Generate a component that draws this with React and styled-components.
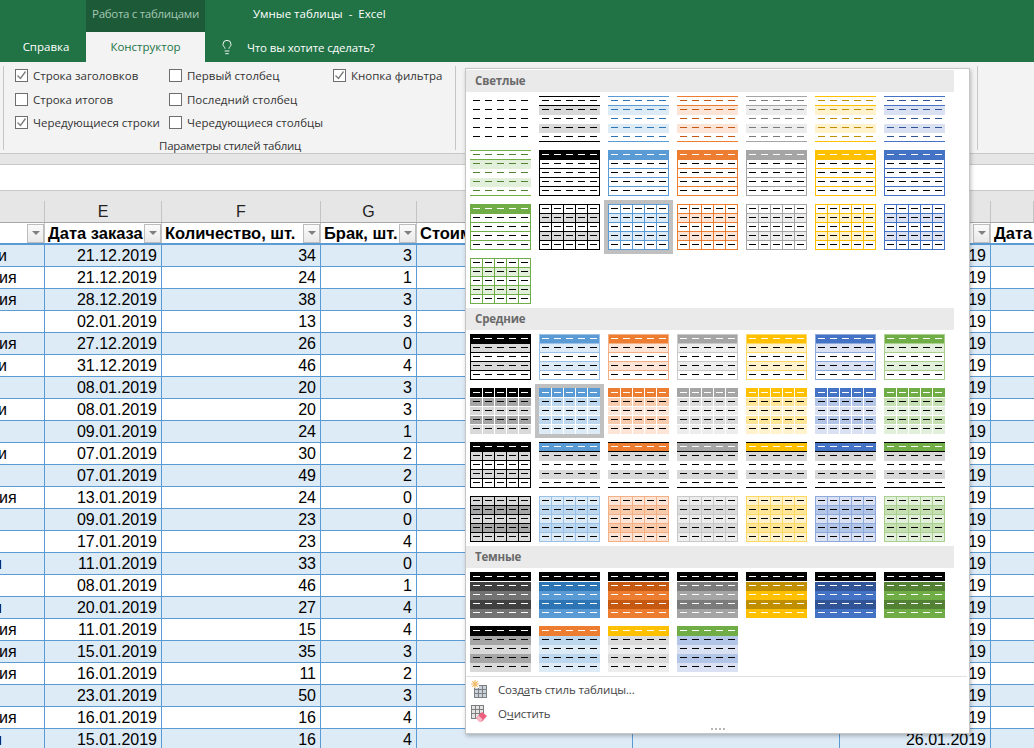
import React from "react";
import styled, { createGlobalStyle } from "styled-components";
import { Lightbulb } from "lucide-react";

const GlobalStyle = createGlobalStyle`
  html, body {
    margin: 0;
    padding: 0;
    background: #fff;
  }
`;

const UI_FONT = `"Open Sans", "Noto Sans", sans-serif`;
const CELL_FONT = `"Liberation Sans", Arial, sans-serif`;

const Ventana = styled.div`
  position: relative;
  width: 1034px;
  height: 748px;
  overflow: hidden;
  font-family: ${UI_FONT};
`;

/* Barra de titulo */
const TitleBar = styled.div`
  display: flex;
  height: 32px;
  padding-left: 86px;
  background: #217346;
  font-size: 11.5px;
  line-height: 27px;
`;

const ContextLabel = styled.div`
  width: 119px;
  background: #1c5a38;
  color: #a6c8b4;
  text-align: center;
  white-space: nowrap;
  letter-spacing: -0.3px;
`;

const WindowTitle = styled.div`
  margin-left: 48px;
  color: #fff;
  white-space: pre;
`;

const TabsBar = styled.div`
  display: flex;
  height: 30px;
  background: #217346;
  font-size: 11.5px;
  line-height: 29px;
  color: #fff;
`;

const Tab = styled.div`
  width: ${(p) => p.$width}px;
  box-sizing: border-box;
  padding-left: ${(p) => p.$inset || 0}px;
  text-align: center;
  white-space: nowrap;
  background: ${(p) => (p.$active ? "#f3f3f3" : "transparent")};
  color: ${(p) => (p.$active ? "#217346" : "#fff")};
`;

const HelpSearch = styled.div`
  display: flex;
  align-items: center;
  gap: 12px;
  margin-left: 14px;
  white-space: nowrap;
  letter-spacing: -0.15px;
  svg {
    flex: none;
  }
`;

/* Cinta */
const Ribbon = styled.div`
  display: flex;
  align-items: flex-start;
  height: 92px;
  padding: 2px 0 0 3px;
  box-sizing: border-box;
  background: #f3f3f3;
  border-bottom: 1px solid #c8c8c8;
  color: #333;
  font-size: 11.5px;
`;

const RibbonSep = styled.div`
  flex: none;
  width: 1px;
  height: 84px;
  margin-top: 2px;
  background: #c6c6c6;
  margin-right: ${(p) => p.$after || 0}px;
`;

const RibbonGroup = styled.div`
  flex: none;
  width: 451px;
  height: 86px;
  display: flex;
  flex-direction: column;
  padding-left: 11px;
  box-sizing: border-box;
`;

const OptionsGrid = styled.div`
  display: grid;
  grid-template-columns: 154px 164px 1fr;
  grid-auto-rows: 23.5px;
`;

const Option = styled.label`
  display: flex;
  align-items: center;
  gap: 5px;
  white-space: nowrap;
  grid-column: ${(p) => p.$col};
  grid-row: ${(p) => p.$row};
`;

const Box = styled.span`
  flex: none;
  width: 13px;
  height: 13px;
  box-sizing: border-box;
  border: 1px solid #6e6e6e;
  background: #fff;
  display: flex;
  align-items: center;
  justify-content: center;
`;

const GroupName = styled.div`
  margin-top: 3px;
  padding-right: 10px;
  text-align: center;
  letter-spacing: -0.3px;
`;

const BarGap = styled.div`
  height: 10px;
  background: #e6e6e6;
  border-bottom: 1px solid #c8c8c8;
`;

const FormulaBar = styled.div`
  height: 25px;
  background: #fff;
  border-bottom: 1px solid #c8c8c8;
`;

/* Hoja */
const COLS = "45px 117px 159px 96px 216px 207px 151px 43px";

const LettersRow = styled.div`
  display: grid;
  grid-template-columns: ${COLS};
  height: 32px;
  padding-top: 10px;
  box-sizing: border-box;
  background: #e6e6e6;
  border-bottom: 1px solid #a8a8a8;
  font: 16px ${CELL_FONT};
  color: #222;
`;

const Letter = styled.div`
  height: 21px;
  line-height: 22px;
  text-align: center;
  border-right: 1px solid #c4c4c4;
`;

const HeaderRow = styled.div`
  display: grid;
  grid-template-columns: ${COLS};
  height: 20px;
  background: #fff;
  border-bottom: 2px solid #5b9bd5;
  font: bold 16.5px ${CELL_FONT};
  color: #000;
`;

const HeaderCell = styled.div`
  display: flex;
  align-items: center;
  justify-content: space-between;
  padding-left: 3px;
  border-right: 1px solid #c4c4c4;
  white-space: nowrap;
  overflow: hidden;
  &:last-child {
    border-right: 0;
  }
`;

const FilterButton = styled.span`
  flex: none;
  margin-left: auto;
  width: 17px;
  height: 19px;
  box-sizing: border-box;
  border: 1px solid #bdbdbd;
  background: linear-gradient(#fbfbfb, #e9e9e9);
  display: flex;
  align-items: center;
  justify-content: center;
  &::after {
    content: "";
    border-left: 4px solid transparent;
    border-right: 4px solid transparent;
    border-top: 4px solid #7f7f7f;
  }
`;

const DataRow = styled.div`
  display: grid;
  grid-template-columns: ${COLS};
  height: 22px;
  box-sizing: border-box;
  border-bottom: 1px solid #5b9bd5;
  background: ${(p) => (p.$band ? "#ddebf7" : "#fff")};
  font: 16px/21px ${CELL_FONT};
  color: #000;
`;

const Cell = styled.div`
  border-right: 1px solid #5b9bd5;
  padding-right: 4px;
  text-align: right;
  white-space: nowrap;
  overflow: hidden;
  &:last-child {
    border-right: 0;
  }
`;

const ClippedCell = styled(Cell)`
  text-align: left;
  padding-right: 0;
  text-indent: ${(p) => p.$indent}px;
`;

/* Galeria de estilos */
const Gallery = styled.div`
  position: absolute;
  left: 465px;
  top: 68px;
  width: 505px;
  height: 666px;
  box-sizing: border-box;
  padding-top: 1px;
  background: #fff;
  border: 1px solid #c6c6c6;
  box-shadow: 1px 2px 4px rgba(0, 0, 0, 0.25);
`;

const SectionTitle = styled.div`
  width: 488px;
  height: 22px;
  box-sizing: border-box;
  padding-left: 9px;
  background: #eaeaea;
  color: #6a6a6a;
  font-size: 11.5px;
  font-weight: 700;
  line-height: 22px;
  letter-spacing: -0.2px;
`;

const ThumbGrid = styled.div`
  display: grid;
  grid-template-columns: repeat(7, 61px);
  grid-auto-rows: 46px;
  gap: 8px;
  padding: 4px 0 4px 4px;
`;

const ThumbSvg = styled.svg`
  display: block;
  width: 61px;
  height: 46px;
  box-shadow: ${(p) => (p.$selected ? "0 0 0 4px #c0c0c0" : "none")};
`;

const MenuSep = styled.div`
  width: 501px;
  height: 1px;
  background: #e1e1e1;
`;

const MenuItem = styled.div`
  display: flex;
  align-items: center;
  gap: 11px;
  height: 24px;
  padding-left: 5px;
  color: #444;
  font-size: 11.5px;
  white-space: nowrap;
  letter-spacing: -0.15px;
  svg {
    flex: none;
  }
`;

const Grip = styled.div`
  display: flex;
  justify-content: center;
  gap: 2px;
  padding-top: 3px;
  span {
    width: 2px;
    height: 2px;
    background: #b8b8b8;
  }
`;

/* ---- dibujo de las miniaturas ---- */
const BLUE = { c: "#5b9bd5", soft: "#9bc2e6", band: "#ddebf7", mid: "#bdd7ee", deep: "#2e75b6" };
const ORANGE = { c: "#ed7d31", soft: "#f4b084", band: "#fce4d6", mid: "#f8cbad", deep: "#c65911" };
const GRAY = { c: "#a5a5a5", soft: "#c9c9c9", band: "#ededed", mid: "#dbdbdb", deep: "#7b7b7b" };
const YELLOW = { c: "#ffc000", soft: "#ffd966", band: "#fff2cc", mid: "#ffe699", deep: "#bf8f00" };
const NAVY = { c: "#4472c4", soft: "#8ea9db", band: "#d9e1f2", mid: "#b4c6e7", deep: "#305496" };
const GREEN = { c: "#70ad47", soft: "#a9d08e", band: "#e2efda", mid: "#c6e0b4", deep: "#548235" };
const BLACK = { c: "#000", soft: "#000", band: "#d9d9d9", mid: "#a6a6a6", deep: "#404040" };
const COLORS = [BLUE, ORANGE, GRAY, YELLOW, NAVY];
const COLORS_G = [...COLORS, GREEN];

const K = "#000";
const W = "#fff";
const ALL_H = [0, 9, 18, 27, 36, 45];

const plain = () => ({ dash: [K, K, K, K, K] });
const lined = (p) => ({
  fills: [null, p.band, null, p.band, null],
  hlines: [0, 9, 45],
  line: p.c,
  dash: Array(5).fill(p === BLACK ? K : p.deep),
});
const boxed = (p) => ({
  fills: [p.c],
  hlines: ALL_H,
  frame: true,
  line: p.c,
  dash: [W, K, K, K, K],
});
const grid = (p) => ({
  fills: [null, p.band, null, p.band, null],
  hlines: ALL_H,
  vlines: true,
  frame: true,
  line: p.c,
  dash: [K, K, K, K, K],
});
const medium = (p) => ({
  fills: [p.c, p.band, null, p.band, null],
  hlines: ALL_H,
  frame: true,
  line: p.soft,
  dash: [W, K, K, K, K],
});
const cells = (p) => ({
  fills: [p.c, p.mid, p.band, p.mid, p.band],
  gaps: true,
  dash: [W, K, K, K, K],
});
const ruled = (p) => ({
  fills: [p.c, "#d9d9d9", null, "#d9d9d9", null],
  hlines: [0, 9, 45],
  line: K,
  dash: [W, K, K, K, K],
});
const gridFill = (p) => ({
  fills: [p.band, p.mid, p.band, p.mid, p.band],
  hlines: ALL_H,
  vlines: true,
  frame: true,
  line: p.soft,
  dash: [K, K, K, K, K],
});
const dark = (a, b) => ({
  fills: [K, a, b, a, b],
  gapAfterHead: true,
  dash: [W, W, W, W, W],
});
const darkLight = (head, a, b) => ({
  fills: [head, a, b, a, b],
  dash: [W, K, K, K, K],
});

const LIGHT_THUMBS = [
  plain(),
  lined(BLACK),
  ...COLORS.map(lined),
  lined(GREEN),
  boxed(BLACK),
  ...COLORS.map(boxed),
  boxed(GREEN),
  grid(BLACK),
  { ...grid(BLUE), selected: true },
  ...COLORS.slice(1).map(grid),
  grid(GREEN),
];

const MEDIUM_THUMBS = [
  medium(BLACK),
  ...COLORS_G.map(medium),
  cells(BLACK),
  { ...cells(BLUE), selected: true },
  ...COLORS_G.slice(1).map(cells),
  {
    fills: [K, "#d9d9d9", null, "#d9d9d9", null],
    hlines: ALL_H,
    vlines: true,
    frame: true,
    line: K,
    dash: [W, K, K, K, K],
  },
  ...COLORS_G.map(ruled),
  gridFill(BLACK),
  ...COLORS_G.map(gridFill),
];

const DARK_THUMBS = [
  dark("#404040", "#737373"),
  ...COLORS_G.map((p) => dark(p.deep, p.c)),
  darkLight(K, "#a6a6a6", "#d9d9d9"),
  darkLight(ORANGE.c, BLUE.mid, BLUE.band),
  darkLight(YELLOW.c, "#dbdbdb", "#ededed"),
  darkLight(GREEN.c, NAVY.mid, NAVY.band),
];

function TableThumb({ spec }) {
  const { fills = [], hlines = [], vlines, frame, line, gaps, gapAfterHead, dash, selected } = spec;
  return (
    <ThumbSvg viewBox="0 0 61 46" shapeRendering="crispEdges" $selected={selected}>
      {fills.map((f, i) =>
        f ? (
          <rect key={i} x="0" y={i === 0 ? 0 : 9 * i + 1} width="61" height={i === 0 ? 10 : 9} fill={f} />
        ) : null
      )}
      {gaps &&
        [9, 18, 27, 36].map((y) => <rect key={y} x="0" y={y} width="61" height="1" fill="#fff" />)}
      {gaps &&
        [12, 24, 36, 48].map((x) => <rect key={x} x={x} y="0" width="1" height="46" fill="#fff" />)}
      {gapAfterHead && <rect x="0" y="9" width="61" height="1" fill="#fff" />}
      {hlines.map((y) => (
        <rect key={y} x="0" y={y} width="61" height="1" fill={line} />
      ))}
      {vlines &&
        [12, 24, 36, 48].map((x) => <rect key={x} x={x} y="0" width="1" height="46" fill={line} />)}
      {frame && <rect x="0" y="0" width="1" height="46" fill={line} />}
      {frame && <rect x="60" y="0" width="1" height="46" fill={line} />}
      {dash.map((color, row) =>
        [0, 1, 2, 3, 4].map((col) => (
          <rect key={row + "-" + col} x={3 + 12 * col} y={4 + 9 * row} width="7" height="1" fill={color} />
        ))
      )}
    </ThumbSvg>
  );
}

function Check() {
  return (
    <svg width="11" height="11" viewBox="0 0 11 11">
      <path d="M1.5 5.5 L4.5 8.5 L9.5 1.5" fill="none" stroke="#7a7a7a" strokeWidth="1.3" />
    </svg>
  );
}

function NewStyleIcon() {
  return (
    <svg width="16" height="18" viewBox="0 0 16 18">
      <rect x="3.5" y="5.5" width="12" height="12" fill="#c9d3de" stroke="#7f7f7f" />
      <path d="M7.5 6v11M11.5 6v11M4 9.5h11M4 13.5h11" stroke="#7f7f7f" />
      <rect x="0" y="0" width="8" height="8" fill="#fff" />
      <path d="M4 0v8M0 4h8M1.2 1.2l5.6 5.6M6.8 1.2L1.2 6.8" stroke="#eebc6a" strokeWidth="1.1" />
    </svg>
  );
}

function ClearIcon() {
  return (
    <svg width="16" height="17" viewBox="0 0 16 17">
      <rect x="0.5" y="0.5" width="12" height="13" fill="#e4e4e4" stroke="#7f7f7f" />
      <path d="M4.5 1v12M8.5 1v12M1 4.5h11M1 8.5h11" stroke="#7f7f7f" />
      <path d="M5 13l6-6 5 4-5 5.5H8z" fill="#ee5f7d" />
      <path d="M5 13l2.6-2.6 4 4L10 16.5H8z" fill="#f7b9c6" />
    </svg>
  );
}

const OPTIONS = [
  { text: "Строка заголовков", col: 1, row: 1, on: true },
  { text: "Строка итогов", col: 1, row: 2 },
  { text: "Чередующиеся строки", col: 1, row: 3, on: true },
  { text: "Первый столбец", col: 2, row: 1 },
  { text: "Последний столбец", col: 2, row: 2 },
  { text: "Чередующиеся столбцы", col: 2, row: 3 },
  { text: "Кнопка фильтра", col: 3, row: 1, on: true },
];

const ROWS = [
  ["и", -2, "21.12.2019", 34, 3],
  ["ия", -1, "21.12.2019", 24, 1],
  ["ия", -1, "28.12.2019", 38, 3],
  ["", 0, "02.01.2019", 13, 3],
  ["ия", -1, "27.12.2019", 26, 0],
  ["и", -2, "31.12.2019", 46, 4],
  ["", 0, "08.01.2019", 20, 3],
  ["и", -2, "08.01.2019", 20, 3],
  ["", 0, "09.01.2019", 24, 1],
  ["и", -2, "07.01.2019", 30, 2],
  ["", 0, "07.01.2019", 49, 2],
  ["ия", -1, "13.01.2019", 24, 0],
  ["", 0, "09.01.2019", 23, 0],
  ["", 0, "17.01.2019", 23, 4],
  ["и", -7, "11.01.2019", 33, 0],
  ["", 0, "08.01.2019", 46, 1],
  ["и", -7, "20.01.2019", 27, 4],
  ["ия", -1, "11.01.2019", 15, 4],
  ["ия", -1, "15.01.2019", 35, 3],
  ["ия", -1, "16.01.2019", 11, 2],
  ["", 0, "23.01.2019", 50, 3],
  ["ия", -1, "16.01.2019", 16, 4],
  ["и", -7, "15.01.2019", 16, 4],
];

function App() {
  const filas = ROWS.map(([tail, indent, date, qty, defect], i) => {
    return (
      <DataRow key={i} $band={i % 2 === 0}>
        <ClippedCell $indent={indent}>{tail}</ClippedCell>
        <Cell>{date}</Cell>
        <Cell>{qty}</Cell>
        <Cell>{defect}</Cell>
        <Cell />
        <Cell />
        <Cell>{i === 22 ? "26.01.2019" : date}</Cell>
        <Cell />
      </DataRow>
    );
  });

  return (
    <Ventana>
      <GlobalStyle />
      <TitleBar>
        <ContextLabel>Работа с таблицами</ContextLabel>
        <WindowTitle>Умные таблицы  -  Excel</WindowTitle>
      </TitleBar>
      <TabsBar>
        <Tab $width={86} $inset={6}>
          Справка
        </Tab>
        <Tab $width={119} $active>
          Конструктор
        </Tab>
        <HelpSearch>
          <Lightbulb size={16} strokeWidth={1.4} />
          Что вы хотите сделать?
        </HelpSearch>
      </TabsBar>

      <Ribbon>
        <RibbonSep />
        <RibbonGroup>
          <OptionsGrid>
            {OPTIONS.map((o) => (
              <Option key={o.text} $col={o.col} $row={o.row}>
                <Box>{o.on && <Check />}</Box>
                {o.text}
              </Option>
            ))}
          </OptionsGrid>
          <GroupName>Параметры стилей таблиц</GroupName>
        </RibbonGroup>
        <RibbonSep $after={521} />
        <RibbonSep />
      </Ribbon>
      <BarGap />
      <FormulaBar />

      <LettersRow>
        <Letter />
        <Letter>E</Letter>
        <Letter>F</Letter>
        <Letter>G</Letter>
        <Letter>H</Letter>
        <Letter>I</Letter>
        <Letter>J</Letter>
        <Letter />
      </LettersRow>
      <HeaderRow>
        <HeaderCell>
          <FilterButton />
        </HeaderCell>
        <HeaderCell>
          Дата заказа
          <FilterButton />
        </HeaderCell>
        <HeaderCell>
          Количество, шт.
          <FilterButton />
        </HeaderCell>
        <HeaderCell>
          Брак, шт.
          <FilterButton />
        </HeaderCell>
        <HeaderCell>Стоимость</HeaderCell>
        <HeaderCell />
        <HeaderCell>
          <FilterButton />
        </HeaderCell>
        <HeaderCell>Дата</HeaderCell>
      </HeaderRow>
      {filas}

      <Gallery>
        <SectionTitle>Светлые</SectionTitle>
        <ThumbGrid>
          {LIGHT_THUMBS.map((t, i) => (
            <TableThumb key={i} spec={t} />
          ))}
        </ThumbGrid>
        <SectionTitle>Средние</SectionTitle>
        <ThumbGrid>
          {MEDIUM_THUMBS.map((t, i) => (
            <TableThumb key={i} spec={t} />
          ))}
        </ThumbGrid>
        <SectionTitle>Темные</SectionTitle>
        <ThumbGrid>
          {DARK_THUMBS.map((t, i) => (
            <TableThumb key={i} spec={t} />
          ))}
        </ThumbGrid>
        <MenuSep />
        <MenuItem>
          <NewStyleIcon />
          <span>
            Созд<u>а</u>ть стиль таблицы...
          </span>
        </MenuItem>
        <MenuItem>
          <ClearIcon />
          <span>
            О<u>ч</u>истить
          </span>
        </MenuItem>
        <Grip>
          <span />
          <span />
          <span />
          <span />
        </Grip>
      </Gallery>
    </Ventana>
  );
}

export default App;
